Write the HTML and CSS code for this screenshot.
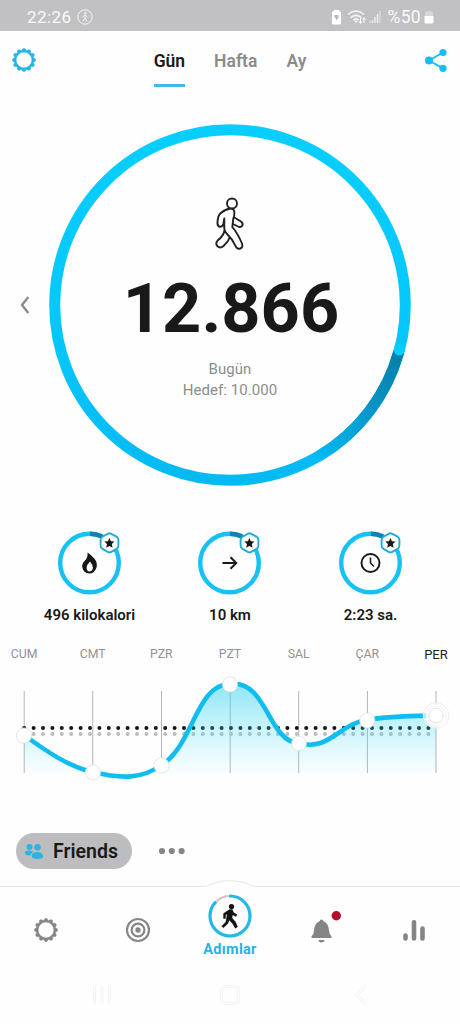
FILE: index.html
```html
<!DOCTYPE html>
<html lang="tr">
<head>
<meta charset="utf-8">
<title>Adımlar</title>
<link rel="stylesheet" href="styles.css">
</head>
<body>
<svg class="defs" aria-hidden="true">
  <symbol id="gear" viewBox="-12 -12 24 24">
    <path fill="currentColor" stroke="currentColor" stroke-width=".5" fill-rule="evenodd" d="M-.9-11.500H.9L2.500-9.200 5-10.400 6.500-9.500 6.700-6.700 9.500-6.500 10.400-5 9.200-2.500 11.500-.9V.9L9.200 2.500 10.400 5 9.500 6.500 6.700 6.700 6.500 9.500 5 10.400 2.500 9.200.9 11.500H-.9L-2.500 9.200-5 10.400-6.500 9.500-6.700 6.700-9.500 6.500-10.400 5-9.200 2.500-11.500.9V-.9L-9.200-2.500-10.400-5-9.500-6.500-6.700-6.700-6.500-9.500-5-10.400-2.500-9.200ZM7.900 0A7.900 7.900 0 1 0-7.900 0 7.900 7.900 0 1 0 7.900 0Z"/>
  </symbol>
  <symbol id="badge-ring" viewBox="0 0 66 66">
    <circle cx="32.500" cy="34" r="29.300" fill="none" stroke="#16c1f3" stroke-width="4.400"/>
    <path d="M33 4.700A29.300 29.300 0 0 1 45 7.500" fill="none" stroke="#1383ad" stroke-width="4.400"/>
    <path d="M50.700 4.800Q52.500 3.800 54.300 4.800L59.500 7.700Q61.400 8.800 61.400 11V16.600Q61.400 18.800 59.500 19.900L54.300 22.900Q52.500 23.900 50.700 22.900L45.500 19.900Q43.600 18.800 43.600 16.600V11Q43.600 8.800 45.500 7.700Z" fill="#fff" stroke="#23a9dc" stroke-width="1.900"/>
    <path d="M52.400 8.900 53.900 12.200 57.500 12.600 54.800 15.100 55.600 18.700 52.400 16.900 49.200 18.700 50 15.100 47.300 12.600 50.900 12.200Z" fill="#161616"/>
  </symbol>
</svg>

<div class="status">
  <span class="clock">22:26</span>
  <svg class="walk-badge" width="16" height="16" viewBox="0 0 16 16" fill="none" stroke="#f5f5f5"><circle cx="8" cy="8" r="7.200"/><circle cx="8.300" cy="4" r="1" fill="#f5f5f5" stroke="none"/><path d="M8 5.500V9L5.800 12.500M8 9 10 12.500M5.600 8 8 5.800 10.400 8"/></svg>
  <svg class="signals" width="52" height="16" viewBox="0 0 52 16">
    <path d="M1.500 3H3V1.500H8V3h1.500V15H1.500Z" fill="#fff" stroke="#fff" stroke-linejoin="round"/>
    <path d="M3.500 6H7.500V9L5 11.500V9H3.500Z" fill="#b8b8ba"/>
    <g fill="none" stroke="#f7f7f7" stroke-width="1.500"><path d="M17 5.500Q25-1.500 33 5.500M19.500 8.700Q25 4 30.500 8.700M22.300 11.300Q25 9 27.700 11.300"/></g>
    <path d="M23 11.700h4L25 14Z" fill="#fff"/>
    <path d="M29.500 9v5M28 12.500l1.500 2 1.500-2M33 14V9M31.600 10.500 33 8.700l1.400 1.800" stroke="#fff" fill="none"/>
    <path d="M41.500 14v-3M44 14V8M46.500 14V5" stroke="#ededed" stroke-width="1.400"/><path d="M49 14V2" stroke="#dcdcdc" stroke-width="1.400"/><path d="M39 14v-2" stroke="#eee"/>
  </svg>
  <span class="percent">%50</span>
  <svg width="10" height="14" viewBox="0 0 10 14"><path d="M3 1h4v1h2v5H1V2h2Z" fill="#d6d6d7"/><path d="M.5 6h9v6q0 1.500-1.500 1.500H2Q.5 13.500.5 12Z" fill="#fff"/></svg>
</div>

<header class="header">
  <svg class="settings" width="24" height="24"><use href="#gear"/></svg>
  <nav class="tabs"><span class="tab active">Gün</span><span class="tab">Hafta</span><span class="tab">Ay</span></nav>
  <svg class="share" width="24" height="25" viewBox="0 0 24 25"><path d="M19 4.500 5 12.500 19 20.300" fill="none" stroke="#16bdf3" stroke-width="1.900"/><g fill="#16bdf3"><circle cx="19" cy="4.500" r="3.600"/><circle cx="5" cy="12.500" r="4"/><circle cx="19" cy="20.300" r="3.600"/></g></svg>
</header>

<main>
  <section class="hero">
    <svg class="prev" width="12" height="20" viewBox="0 0 12 20"><path d="M9.300 2 3 10 9.300 18" fill="none" stroke="#8b8b8b" stroke-width="2.400"/></svg>
    <div class="dial">
      <svg class="ring" width="362" height="362" viewBox="0 0 362 362">
        <defs><linearGradient id="tail" gradientUnits="userSpaceOnUse" x1="348" y1="228" x2="270" y2="332"><stop offset="0" stop-color="#0580a8"/><stop offset=".45" stop-color="#0893c6"/><stop offset="1" stop-color="#05b9f2"/></linearGradient>
        <linearGradient id="rest" x1="0" y1="1" x2="0" y2="0"><stop offset="0" stop-color="#05b9f2"/><stop offset=".35" stop-color="#05c6fc"/><stop offset="1" stop-color="#08ceff"/></linearGradient></defs>
        <circle cx="181" cy="181" r="175.300" fill="none" stroke="url(#rest)" stroke-width="11"/>
        <path d="M350 227A175.300 175.300 0 0 1 270 332" fill="none" stroke="url(#tail)" stroke-width="11"/>
        <circle cx="350.300" cy="226" r="5.500" fill="#08ceff"/>
      </svg>
      <svg class="walker" width="30" height="54" viewBox="0 0 30 54" fill="#fff" stroke="#202020" stroke-width="1.900" stroke-linejoin="round" stroke-linecap="round">
        <path d="M9.500 33.500Q8.500 39 2.600 43.500 0 46.500 2.500 49.300 5.200 51.800 8.500 49 13.500 44.500 15.500 39"/>
        <path d="M18.500 20 26 24.500Q28.500 26.300 27.300 28.600 25.800 30.800 23 29.500L17 26.500"/>
        <path d="M18.500 12.500Q20.500 16 18.300 21.500L17.300 30Q22.500 36 27 46.500 28.400 50.200 25.300 51.500 22 52.600 20.500 49 17.500 42 12.500 37.500 9.300 34.500 9.300 31.500V21.500L8.300 27.500Q7 30.300 4.200 29.500 2.100 28.700 2.500 25 3 18.500 5.500 16.300 10.500 12 15.500 11.500 17.500 11.400 18.500 12.500Z"/>
        <circle cx="17" cy="6.500" r="5"/>
      </svg>
      <strong class="steps">12.866</strong>
      <span class="goal today">Bugün</span>
      <span class="goal">Hedef: 10.000</span>
    </div>
  </section>

  <section class="stats">
    <div class="stat"><svg width="66" height="66" viewBox="0 0 66 66"><use href="#badge-ring"/><path d="M30.500 23.500Q34.500 26 37.500 29.700 41 34 39.300 39 37.400 44.500 32.300 44.500 26.500 44.200 25.300 38.500 24.700 34.500 28 31.500 31 28.500 30.500 23.500ZM33 32.500Q29.800 35.500 29.600 38.700 29.700 42.500 32.600 42.500 36 42 35.800 38.500 35.600 35.500 33 32.500Z" fill="#171717" fill-rule="evenodd"/></svg><b>496 kilokalori</b></div>
    <div class="stat"><svg width="66" height="66" viewBox="0 0 66 66"><use href="#badge-ring"/><path d="M25.500 34H39M33.500 28.300 39.300 34 33.500 39.700" fill="none" stroke="#171717" stroke-width="1.900"/></svg><b>10 km</b></div>
    <div class="stat"><svg width="66" height="66" viewBox="0 0 66 66"><use href="#badge-ring"/><circle cx="32.500" cy="34" r="9" fill="none" stroke="#171717" stroke-width="1.900"/><path d="M32.500 28.500V34L36 37.500" fill="none" stroke="#222" stroke-width="1.600"/></svg><b>2:23 sa.</b></div>
  </section>

  <section class="week">
    <div class="days"><span>CUM</span><span>CMT</span><span>PZR</span><span>PZT</span><span>SAL</span><span>ÇAR</span><span class="now">PER</span></div>
    <svg class="chart" width="460" height="120" viewBox="0 670 460 120">
      <defs><linearGradient id="area" gradientUnits="userSpaceOnUse" x1="0" y1="684" x2="0" y2="773"><stop offset="0" stop-color="#19cbed" stop-opacity=".48"/><stop offset=".55" stop-color="#38d7f4" stop-opacity=".24"/><stop offset="1" stop-color="#5be5fa" stop-opacity=".03"/></linearGradient></defs>
      <path d="M24.200 691V773M92.800 691V773M161.500 691V773M230.200 684V773M298.700 691V773M367.400 691V773M436 691V773" stroke="#b4b4b4"/>
      <g fill="none" stroke-width="4" stroke-linecap="round" stroke-dasharray="0 9.400"><path d="M24.200 728H430" stroke="#151515"/><path d="M33.600 734H430" stroke="#bcbcbc"/></g>
      <path d="M24 735C46 751 69 767 93 772 122 779 142 779 161.500 765 193 746 196 684 230 684 267 679 268 742 298.500 743 329 752 340 723 367 720 389 716 414 716 436 715.500V773H24Z" fill="url(#area)"/>
      <path d="M24 735C46 751 69 767 93 772 122 779 142 779 161.500 765 193 746 196 684 230 684 267 679 268 742 298.500 743 329 752 340 723 367 720 389 716 414 716 436 715.500" fill="none" stroke="#10bdf0" stroke-width="4.600"/>
      <circle cx="436" cy="715.500" r="12.800" fill="#fff" fill-opacity=".65" stroke="#eee"/><circle cx="436" cy="715.500" r="10" fill="#fff" stroke="#f3f3f3"/>
      <g fill="#fff" stroke="#ddd" stroke-width=".8"><circle cx="24" cy="735.500" r="7.600"/><circle cx="93" cy="772.500" r="7.600"/><circle cx="161.500" cy="765.500" r="7.600"/><circle cx="230" cy="684.500" r="7.600"/><circle cx="299" cy="743.500" r="7.400"/><circle cx="367.300" cy="720.500" r="7.600"/><circle cx="436" cy="715.500" r="7.300"/></g>
    </svg>
  </section>

  <section class="social">
    <div class="friends"><svg width="20" height="18" viewBox="0 0 20 18" fill="#2bb3e4"><circle cx="5.500" cy="4" r="3"/><circle cx="13.500" cy="4.300" r="3.300"/><path d="M.5 9Q4 6.500 9 8.500L6 12.500Q1 13 .5 9ZM7.500 13Q8 9 13 9 18.500 9 19.300 13.500 18.500 16 14 16 8 16 7.500 13Z"/></svg><span>Friends</span></div>
    <svg class="more" width="28" height="8" viewBox="0 0 28 8" fill="#858587"><circle cx="4" cy="4" r="3.100"/><circle cx="13.800" cy="4" r="3.100"/><circle cx="23.600" cy="4" r="3.100"/></svg>
  </section>
</main>

<footer class="footer">
  <svg class="hump" width="460" height="10" viewBox="0 0 460 10"><path d="M0 6.500H203C211 6.500 213 .8 230 .8S249 6.500 257 6.500H460" fill="none" stroke="#e6e6e6"/></svg>
  <nav class="bottom">
    <span class="item"><svg class="grey" width="24" height="24"><use href="#gear"/></svg></span>
    <span class="item"><svg width="26" height="26" viewBox="0 0 26 26" fill="none" stroke="#858587" stroke-width="2.100"><circle cx="13" cy="13" r="11"/><circle cx="13" cy="13" r="6.400"/><circle cx="13" cy="13" r="2.700" fill="#858587" stroke="none"/></svg></span>
    <span class="item current">
      <svg width="44" height="44" viewBox="0 0 44 44"><circle cx="22" cy="22" r="20" fill="none" stroke="#23b8ea" stroke-width="3.200"/><path d="M8 7.500Q13.500 2 21 2" fill="none" stroke="#fff" stroke-width="4.500"/><path d="M8.500 7.500Q13.500 2.500 20.500 2.100" fill="none" stroke="#d9bac4" stroke-width="2"/>
      <circle cx="23.500" cy="12.600" r="2.600" fill="#111"/><path d="M21.500 15.500H24.300L25.500 18.500 29 20.800 28 22.600 24.500 20.800 24 24 27.500 28 29.500 33 27.300 34.200 24.500 29.500 21.300 26 19.800 29.500 15.500 33.800 13.700 32.200 17.800 28 19.300 20 17.500 21V24.500H15.500V19.500Z" fill="#111" stroke="#111" stroke-width=".4"/></svg>
      <b>Adımlar</b>
    </span>
    <span class="item"><svg class="bell" width="34" height="34" viewBox="0 0 34 34"><path d="M16.500 6.500Q18.100 6.500 18.500 8.300 23.500 10 24 17.500 24.200 21.500 26.500 23.500V25H6.500V23.500Q8.800 21.500 9 17.500 9.500 10 14.500 8.300 14.900 6.500 16.500 6.500ZM13.300 27h6.400Q19.300 29.500 16.500 29.500T13.300 27Z" fill="#858587"/><circle cx="31.300" cy="2.800" r="4.700" fill="#b80a2c"/></svg></span>
    <span class="item"><svg width="24" height="24" viewBox="0 0 24 24" stroke="#858587" stroke-width="4.600" stroke-linecap="round"><path d="M3.500 17.500V20.500M12 4.300V20.500M20.500 10.500V20.500"/></svg></span>
  </nav>
  <div class="system">
    <svg width="20" height="22" viewBox="0 0 20 22" fill="none" stroke="#f4f4f4"><path d="M1.500 1V20M3.500 1V20M9 1V20M11 1V20M16.500 1V20M18.500 1V20"/></svg>
    <svg class="home" width="22" height="22" viewBox="0 0 22 22" fill="none" stroke="#f4f4f4"><rect x="1.500" y="1.500" width="19" height="19" rx="5"/><rect x="3.500" y="3.500" width="15" height="15" rx="3.500"/></svg>
    <svg width="14" height="22" viewBox="0 0 14 22" fill="none" stroke="#f1f1f1"><path d="M11.500.5 1 11 11.500 21.500M13 2.500 4 11 13 19.500"/></svg>
  </div>
</footer>
</body>
</html>
```
FILE: styles.css
```css
* { box-sizing: border-box; }
body {
  margin: 0;
  width: 460px;
  height: 1024px;
  overflow: hidden;
  background: #fefefe;
  color: #191919;
  font-family: Roboto, sans-serif;
}
svg { display: block; flex: none; }
.defs { position: absolute; width: 0; height: 0; }

.status {
  height: 31px;
  padding: 3px 26px 0 27px;
  display: flex;
  align-items: center;
  background: #c1c1c3;
  color: #fafafa;
}
.clock { width: 50px; font-size: 17px; letter-spacing: .4px; }
.signals { margin-left: auto; }
.percent { margin: 0 3px 0 5px; font-size: 17.5px; letter-spacing: .3px; }

.header {
  height: 57px;
  padding: 17px 12px 0;
  display: flex;
  align-items: flex-start;
  justify-content: space-between;
}
.settings { color: #25b3e6; }
.tabs { display: flex; gap: 29px; }
.tab {
  height: 39px;
  padding-top: 3px;
  font-size: 17.5px;
  line-height: 20px;
  font-weight: 600;
  color: #8b8b8b;
}
.tab.active { color: #191919; border-bottom: 3px solid #42b8e9; }

.hero { display: flex; align-items: center; height: 434px; padding-left: 19px; }
.prev { margin-right: 18px; }
.dial {
  position: relative;
  width: 362px;
  height: 362px;
  display: flex;
  flex-direction: column;
  align-items: center;
  padding-top: 73px;
}
.ring { position: absolute; inset: 0; }
.steps { margin-top: 17px; padding-left: 2px; font-size: 68.5px; line-height: 82px; font-weight: 700; }
.goal { font-size: 15px; line-height: 21px; color: #8c8c8c; letter-spacing: .05px; }
.today { margin-top: 9px; }

.stats { display: flex; justify-content: center; height: 119px; padding-top: 7px; }
.stat { width: 140.5px; display: flex; flex-direction: column; align-items: center; }
.stat b { margin-top: 11px; font-size: 15px; line-height: 18px; font-weight: 600; }

.week { height: 186px; }
.days { display: grid; grid-template-columns: repeat(7, 68.65px); justify-content: center; height: 29px; padding-top: 5px; }
.days span { text-align: center; font-size: 12.3px; line-height: 17px; color: #929292; }
.days .now { color: #222; font-size: 13px; }

.social { display: flex; align-items: center; gap: 26px; height: 48px; padding-left: 16px; }
.friends {
  width: 116px;
  height: 36px;
  display: flex;
  align-items: center;
  gap: 9px;
  padding: 1px 0 0 8px;
  border-radius: 18px;
  background: #bdbdbf;
  font-size: 19.5px;
  font-weight: 600;
}

.footer { margin-top: 5px; height: 144px; }
.bottom { display: grid; grid-template-columns: repeat(5, 92px); height: 80px; }
.item { height: 80px; display: flex; flex-direction: column; align-items: center; justify-content: center; }
.item.current { justify-content: flex-start; padding-top: 4px; }
.item b { margin-top: 3px; font-size: 14.5px; line-height: 18px; font-weight: 700; letter-spacing: .3px; color: #23b3e6; }
.grey { color: #858587; }
.bell { overflow: visible; }
.system { display: flex; align-items: center; justify-content: space-between; height: 50px; padding: 0 92px; }
.home { margin-right: 6px; }
```
